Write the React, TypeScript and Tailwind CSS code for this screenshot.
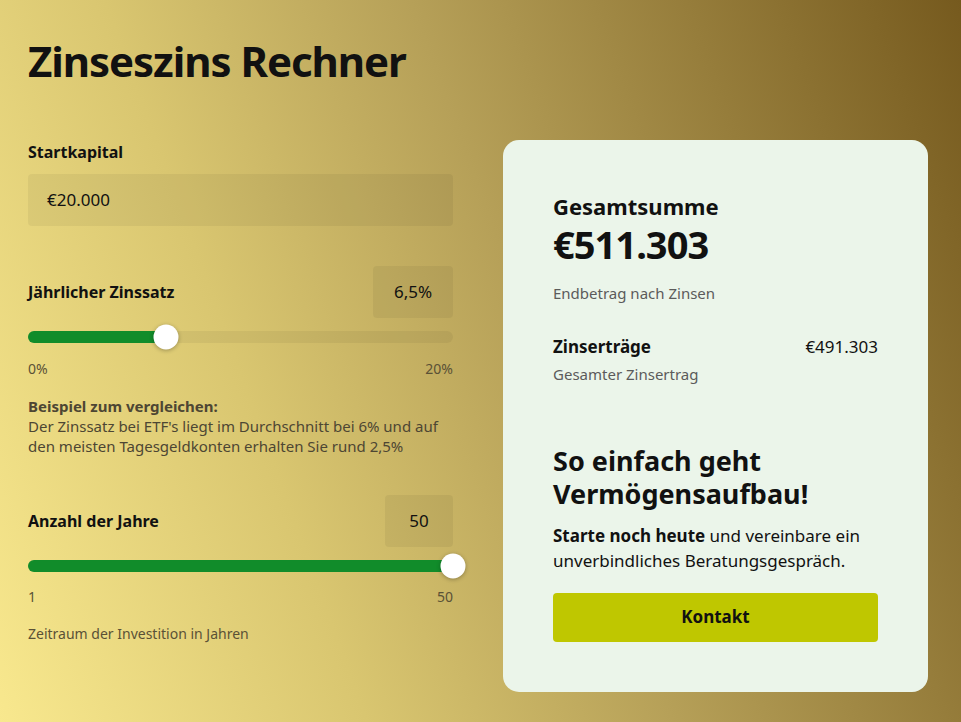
import { useState } from "react";

const font = { fontFamily: '"Noto Sans", "Open Sans", sans-serif' };

function Slider({ value, min, max }: { value: number; min: number; max: number }) {
  const pct = ((value - min) / (max - min)) * 100;
  return (
    <div className="relative h-3 w-full rounded-full bg-black/5">
      <div className="h-3 rounded-full bg-[#118c2a]" style={{ width: `${pct}%` }} />
      <div
        className="absolute top-1/2 h-[25px] w-[25px] -translate-x-1/2 -translate-y-1/2 rounded-full bg-white shadow-[0_1px_4px_rgba(0,0,0,0.3)]"
        style={{ left: `${pct}%` }}
      />
    </div>
  );
}

export default function App() {
  const [rate] = useState(6.5);
  const [years] = useState(50);

  return (
    <div
      className="min-h-screen w-full bg-[linear-gradient(70deg,#f8e88e_0%,#d9c670_30%,#b6a058_55%,#765a1e_100%)] text-[#111]"
      style={font}
    >
      <div className="px-7 pt-[33px]">
        <h1 className="text-[42px] font-bold leading-[56px] tracking-tight">Zinseszins Rechner</h1>

        <div className="mt-[51px] flex gap-[50px]">
          {/* Left column: inputs */}
          <div className="w-[425px] shrink-0">
            <div className="text-[16px] font-bold leading-6">Startkapital</div>
            <div className="mt-[10px] flex h-[52px] items-center rounded bg-black/5 px-[19px] text-[17px]">
              €20.000
            </div>

            <div className="mt-10 flex items-center justify-between">
              <span className="text-[16px] font-bold">Jährlicher Zinssatz</span>
              <div className="flex h-[52px] w-20 items-center justify-center rounded bg-black/5 text-[17px]">
                6,5%
              </div>
            </div>
            <div className="mt-[13px]">
              <Slider value={rate} min={0} max={20} />
            </div>
            <div className="mt-[15px] flex justify-between text-[14px] text-[#5a5136]">
              <span>0%</span>
              <span>20%</span>
            </div>
            <div className="mt-[17px] text-[15px] leading-5 text-[#4d4633]">
              <div className="font-bold">Beispiel zum vergleichen:</div>
              <div>
                Der Zinssatz bei ETF's liegt im Durchschnitt bei 6% und auf den meisten Tagesgeldkonten erhalten Sie
                rund 2,5%
              </div>
            </div>

            <div className="mt-[39px] flex items-center justify-between">
              <span className="text-[16px] font-bold">Anzahl der Jahre</span>
              <div className="flex h-[52px] w-[68px] items-center justify-center rounded bg-black/5 text-[17px]">
                50
              </div>
            </div>
            <div className="mt-[13px]">
              <Slider value={years} min={1} max={50} />
            </div>
            <div className="mt-[14px] flex justify-between text-[14px] text-[#5a5136]">
              <span>1</span>
              <span>50</span>
            </div>
            <div className="mt-[16px] text-[14px] text-[#5a5136]">Zeitraum der Investition in Jahren</div>
          </div>

          {/* Right column: result card */}
          <div className="w-[425px] shrink-0 rounded-2xl bg-[#ebf5ea] px-[50px] pb-[50px] pt-[52px]">
            <div className="text-[22px] font-bold leading-7">Gesamtsumme</div>
            <div className="mt-[2px] text-[38px] font-bold leading-[44px] tracking-tight">€511.303</div>
            <div className="mt-[16px] text-[15px] text-[#5b5b5b]">Endbetrag nach Zinsen</div>

            <div className="mt-[29px] flex items-center justify-between text-[17px]">
              <span className="font-bold">Zinserträge</span>
              <span>€491.303</span>
            </div>
            <div className="mt-[4px] text-[15px] text-[#5b5b5b]">Gesamter Zinsertrag</div>

            <div className="mt-[58px] text-[27px] font-bold leading-[33px]">
              So einfach geht
              <br />
              Vermögensaufbau!
            </div>
            <p className="mt-[13px] text-[17px] leading-[25px]">
              <b>Starte noch heute</b> und vereinbare ein unverbindliches Beratungsgespräch.
            </p>
            <button className="mt-[20px] h-[49px] w-full rounded bg-[#bfc700] text-[17px] font-bold">Kontakt</button>
          </div>
        </div>
      </div>
    </div>
  );
}
